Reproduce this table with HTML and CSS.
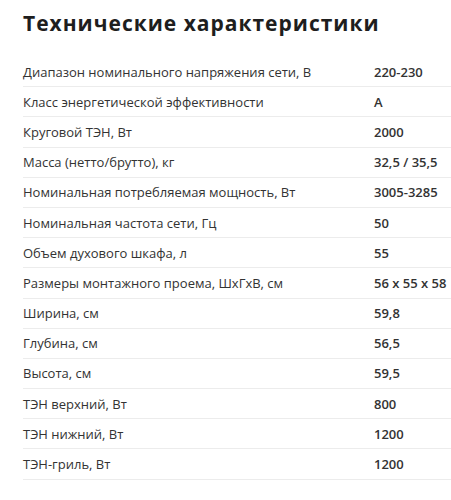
FILE: index.html
```html
<!DOCTYPE html>
<html lang="ru">
<head>
<meta charset="utf-8">
<title>Технические характеристики</title>
<link rel="stylesheet" href="styles.css">
</head>
<body>
<section class="specs">
  <h2 class="specs-title">Технические характеристики</h2>
  <div class="specs-table">
    <div class="row"><span class="label">Диапазон номинального напряжения сети, В</span><span class="value">220-230</span></div>
    <div class="row"><span class="label">Класс энергетической эффективности</span><span class="value">A</span></div>
    <div class="row"><span class="label">Круговой ТЭН, Вт</span><span class="value">2000</span></div>
    <div class="row"><span class="label">Масса (нетто/брутто), кг</span><span class="value">32,5 / 35,5</span></div>
    <div class="row"><span class="label">Номинальная потребляемая мощность, Вт</span><span class="value">3005-3285</span></div>
    <div class="row"><span class="label">Номинальная частота сети, Гц</span><span class="value">50</span></div>
    <div class="row"><span class="label">Объем духового шкафа, л</span><span class="value">55</span></div>
    <div class="row"><span class="label">Размеры монтажного проема, ШхГхВ, см</span><span class="value">56 x 55 x 58</span></div>
    <div class="row"><span class="label">Ширина, см</span><span class="value">59,8</span></div>
    <div class="row"><span class="label">Глубина, см</span><span class="value">56,5</span></div>
    <div class="row"><span class="label">Высота, см</span><span class="value">59,5</span></div>
    <div class="row"><span class="label">ТЭН верхний, Вт</span><span class="value">800</span></div>
    <div class="row"><span class="label">ТЭН нижний, Вт</span><span class="value">1200</span></div>
    <div class="row"><span class="label">ТЭН-гриль, Вт</span><span class="value">1200</span></div>
  </div>
</section>
</body>
</html>
```
FILE: styles.css
```css
html, body {
  margin: 0;
  padding: 0;
  background: #ffffff;
}
.specs {
  padding: 8px 0 0 23px;
  font-family: "Open Sans", "DejaVu Sans", sans-serif;
}
.specs-title {
  margin: 0;
  font-size: 21px;
  line-height: 30px;
  font-weight: 700;
  color: #1e1e1e;
  letter-spacing: 1px;
}
.specs-table {
  margin-top: 19px;
}
.row {
  display: flex;
  align-items: center;
  box-sizing: border-box;
  height: 30.2px;
  border-bottom: 1px solid #ececec;
  font-size: 13px;
  color: #333333;
}
.label {
  width: 351px;
  flex: none;
}
.value {
  font-weight: 600;
  color: #333333;
}
```
